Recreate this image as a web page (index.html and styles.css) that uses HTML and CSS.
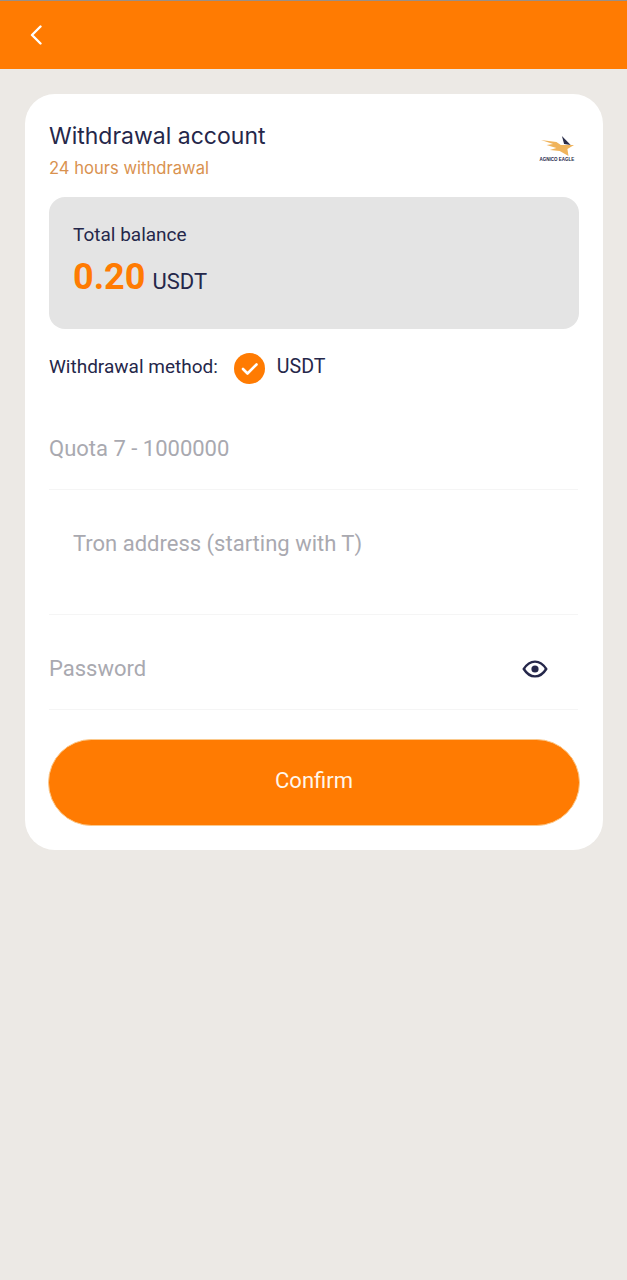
FILE: index.html
```html
<!DOCTYPE html>
<html lang="en">

<head>
    <meta charset="UTF-8">
    <meta name="viewport" content="width=device-width, initial-scale=1.0">
    <title>Withdrawal</title>
    <link rel="stylesheet" href="styles.css">
</head>

<body>
    <!-- top bar -->
    <div class="header">
        <svg class="back" width="14" height="20" viewBox="0 0 14 20">
            <path d="M11.5 1.5 L3 10 L11.5 18.5" fill="none" stroke="#fff" stroke-width="2.4" stroke-linecap="round" stroke-linejoin="round" />
        </svg>
    </div>

    <div class="card">
        <div class="card-top">
            <div>
                <div class="title">Withdrawal account</div>
                <div class="subtitle">24 hours withdrawal</div>
            </div>
            <div class="logo">
                <svg width="33" height="21" viewBox="0 0 30 21" preserveAspectRatio="none">
                    <path d="M0 4 L14 6 L18 9 L30 9 L24 13 L25 20 L17 15 L8 14 L14 12 L5 9 L11 8 Z" fill="#f0b45c" />
                    <path d="M19 0 L27 9 L21 8 Z" fill="#2a2d4a" />
                </svg>
                <span class="logo-text">AGNICO EAGLE</span>
            </div>
        </div>

        <div class="balance">
            <div class="balance-label">Total balance</div>
            <div class="balance-row">
                <span class="balance-num">0.20</span>
                <span class="balance-unit">USDT</span>
            </div>
        </div>

        <div class="method">
            <span class="method-text">Withdrawal method:</span>
            <svg class="check" width="31" height="31" viewBox="0 0 31 31">
                <circle cx="15.5" cy="15.5" r="15.5" fill="#ff7b02" />
                <path d="M9 16 L13.5 20.5 L22.5 11.5" fill="none" stroke="#fff" stroke-width="2.6" stroke-linecap="round" stroke-linejoin="round" />
            </svg>
            <span class="method-text method-usdt">USDT</span>
        </div>

        <div class="field field-quota">Quota 7 - 1000000</div>
        <div class="field field-address">Tron address (starting with T)</div>
        <div class="field field-password">
            <span>Password</span>
            <svg class="eye" width="26" height="18" viewBox="0 0 26 18">
                <path d="M1.8 9 C5 3.8 8.8 1.6 13 1.6 C17.2 1.6 21 3.8 24.2 9 C21 14.2 17.2 16.4 13 16.4 C8.8 16.4 5 14.2 1.8 9 Z" fill="none" stroke="#25274a" stroke-width="2.4" />
                <circle cx="13" cy="9" r="3.6" fill="#25274a" />
            </svg>
        </div>

        <button class="confirm">Confirm</button>
    </div>
</body>

</html>
```

FILE: styles.css
```css
body {
    margin: 0;
    padding: 0;
    height: 1280px;
    overflow: hidden;
    background-color: #ece9e5;
    font-family: Roboto, "Liberation Sans", sans-serif;
    color: #25274a;
}

.header {
    height: 69px;
    background-color: #ff7b02;
    border-top: 1px solid #9a8f86;
    display: flex;
    align-items: center;
    padding-left: 29px;
    box-sizing: border-box;
}

.back {
    display: block;
}

.card {
    margin: 25px 24px 0 25px;
    height: 756px;
    box-sizing: border-box;
    padding: 28px 24px 0 24px;
    background-color: white;
    border-radius: 30px;
}

.card-top {
    display: flex;
    justify-content: space-between;
    height: 75px;
}

.title {
    font-family: Inter, Roboto, sans-serif;
    font-size: 23px;
    line-height: 28px;
}

.subtitle {
    font-family: Inter, Roboto, sans-serif;
    font-size: 16.6px;
    line-height: 20px;
    margin-top: 8px;
    color: #d9924f;
}

.logo {
    width: 36px;
    display: flex;
    flex-direction: column;
    align-items: center;
    padding-top: 14px;
    margin-right: 4px;
}

.logo-text {
    font-family: "Liberation Sans", sans-serif;
    font-size: 4.5px;
    font-weight: bold;
    line-height: 6px;
    white-space: nowrap;
}

.balance {
    height: 132px;
    box-sizing: border-box;
    padding: 27px 24px 0 24px;
    background-color: #e4e4e4;
    border-radius: 16px;
}

.balance-label {
    font-size: 19px;
    line-height: 22px;
}

.balance-row {
    display: flex;
    align-items: baseline;
    gap: 7px;
    margin-top: 9px;
}

.balance-num {
    font-size: 36px;
    line-height: 44px;
    font-weight: bold;
    color: #ff7b02;
}

.balance-unit {
    font-size: 22px;
}

.method {
    display: flex;
    align-items: center;
    height: 31px;
    margin-top: 24px;
    font-size: 19px;
}

.method-text {
    margin-top: -4px;
}

.method-usdt {
    font-size: 19.6px;
}

.check {
    margin: 0 12px 0 16px;
}

.field {
    border-bottom: 1px solid #f5f5f5;
    font-size: 22px;
    color: #a9a9b0;
    box-sizing: border-box;
    margin-right: 1px;
}

.field-quota {
    height: 106px;
    padding-top: 51px;
    line-height: 28px;
}

.field-address {
    height: 125px;
    padding: 40px 0 0 24px;
    line-height: 28px;
}

.field-password {
    height: 95px;
    padding: 40px 30px 0 0;
    line-height: 28px;
    display: flex;
    justify-content: space-between;
}

.eye {
    margin-top: 5px;
}

.confirm {
    display: block;
    width: 532px;
    height: 87px;
    margin: 29px 0 0 -1px;
    padding: 0 0 4px 0;
    border: 1px solid #fbc98c;
    border-radius: 44px;
    background-color: #ff7b02;
    color: #fff6ea;
    font-family: Roboto, sans-serif;
    font-size: 22px;
}
```
